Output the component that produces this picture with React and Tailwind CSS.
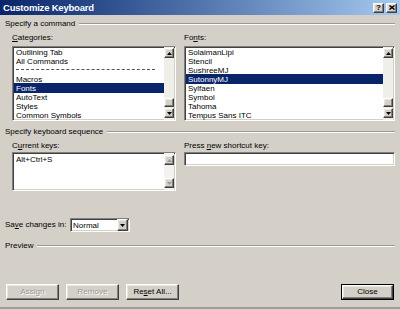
import { useState } from 'react'

const sunken =
  'border border-t-[#808080] border-l-[#808080] border-b-white border-r-white shadow-[inset_1px_1px_0_#404040,inset_-1px_-1px_0_#d4d0c8]'
const raised =
  'border border-t-white border-l-white border-b-[#404040] border-r-[#404040] shadow-[inset_-1px_-1px_0_#808080,inset_1px_1px_0_#e8e6e0]'

const categories = ['Outlining Tab', 'All Commands', '---', 'Macros', 'Fonts', 'AutoText', 'Styles', 'Common Symbols']
const fonts = ['SolaimanLipi', 'Stencil', 'SushreeMJ', 'SutonnyMJ', 'Sylfaen', 'Symbol', 'Tahoma', 'Tempus Sans ITC']

function Arrow({ up, disabled }) {
  return (
    <svg width="5" height="3" viewBox="0 0 5 3">
      <path d={up ? 'M2.5 0L5 3H0Z' : 'M0 0H5L2.5 3Z'} fill={disabled ? '#9c9a95' : '#000'} />
    </svg>
  )
}

function ScrollBtn({ up, disabled }) {
  return (
    <div className={`h-[10px] shrink-0 bg-[#d4d0c8] flex items-center justify-center ${raised}`}>
      <Arrow up={up} disabled={disabled} />
    </div>
  )
}

function Scrollbar({ thumb = true, disabled }) {
  return (
    <div className="w-[10px] shrink-0 flex flex-col bg-[#efeee9] pt-[1px] pb-[2px]">
      <ScrollBtn up disabled={disabled} />
      <div className="flex-1" />
      {thumb && <div className={`h-[9px] mb-[1px] bg-[#d4d0c8] ${raised}`} />}
      <ScrollBtn disabled={disabled} />
    </div>
  )
}

function ListBox({ items, selected }) {
  return (
    <div className={`h-[75px] bg-white flex pr-[1px] ${sunken}`}>
      <div className="flex-1 flex flex-col pl-[1px]">
        {items.map((it) =>
          it === '---' ? (
            <div key={it} className="h-[9.15px] flex items-center px-[2px]">
              <div className="w-full mr-[7px] border-t border-dashed border-[#555]" />
            </div>
          ) : (
            <div
              key={it}
              className={`h-[9.15px] leading-[9px] pt-[0.5px] px-[2px] whitespace-nowrap ${
                it === selected ? 'bg-[#0a246a] text-white' : ''
              }`}
            >
              {it}
            </div>
          )
        )}
      </div>
      <Scrollbar />
    </div>
  )
}

function GroupHeader({ label, className = '' }) {
  return (
    <div className={`h-[10px] flex items-center ${className}`}>
      <span className="leading-[10px]">{label}</span>
      <div className="flex-1 ml-[4px] h-[2px] border-t border-t-[#9b9892] border-b border-b-white" />
    </div>
  )
}

function Button({ children, disabled, def, className = '' }) {
  return (
    <div
      className={`h-[16px] flex items-center justify-center bg-[#d4d0c8] ${
        def ? 'border border-black' : ''
      } ${className}`}
    >
      <div className={`w-full h-full flex items-center justify-center ${raised}`}>
        <span
          className={
            disabled ? 'text-[#9a9893] [text-shadow:1px_1px_0_#fff]' : 'text-black'
          }
        >
          {children}
        </span>
      </div>
    </div>
  )
}

export default function App() {
  const [keys] = useState('Alt+Ctrl+S')
  return (
    <div className="w-[400px] h-[310px] bg-[#d4d0c8] flex flex-col text-[8px] text-black overflow-hidden font-['Liberation_Sans',Arial,sans-serif]">
      <div className="h-[15px] shrink-0 flex items-center justify-between pl-[3px] pr-[3px] bg-gradient-to-r from-[#0a246a] to-[#a6caf0]">
        <span className="text-white font-bold text-[9.5px] leading-[10px] tracking-[-0.2px]">
          Customize Keyboard
        </span>
        <div className="flex gap-[2px]">
          <div className={`w-[11px] h-[10px] bg-[#d4d0c8] flex items-center justify-center ${raised}`}>
            <span className="font-bold text-[8px] leading-[8px]">?</span>
          </div>
          <div className={`w-[11px] h-[10px] bg-[#d4d0c8] flex items-center justify-center ${raised}`}>
            <svg width="6" height="5" viewBox="0 0 6 5">
              <path d="M0.5 0.5L5.5 4.5M5.5 0.5L0.5 4.5" stroke="#000" strokeWidth="1.4" />
            </svg>
          </div>
        </div>
      </div>

      <div className="flex-1 flex flex-col px-[5px]">
        <GroupHeader label="Specify a command" className="mt-[4px]" />

        <div className="flex mt-[4px] pl-[7px] gap-[8px]">
          <div className="w-[164px] flex flex-col">
            <div className="h-[10px] leading-[10px]">
              <u>C</u>ategories:
            </div>
            <div className="mt-[3px]">
              <ListBox items={categories} selected="Fonts" />
            </div>
          </div>
          <div className="flex-1 flex flex-col">
            <div className="h-[10px] leading-[10px]">
              Fo<u>n</u>ts:
            </div>
            <div className="mt-[3px]">
              <ListBox items={fonts} selected="SutonnyMJ" />
            </div>
          </div>
        </div>

        <GroupHeader label="Specify keyboard sequence" className="mt-[6px]" />

        <div className="flex mt-[4px] pl-[7px] gap-[8px]">
          <div className="w-[164px] flex flex-col">
            <div className="h-[10px] leading-[10px]">
              C<u>u</u>rrent keys:
            </div>
            <div className={`mt-[1px] h-[39px] bg-white flex pr-[1px] ${sunken}`}>
              <div className="flex-1 px-[3px] pt-[2px] leading-[9px]">{keys}</div>
              <div className="w-[10px] shrink-0 flex flex-col bg-[#f3f2ee] pt-[2px] pb-[2px]">
                <ScrollBtn up disabled />
                <div className="flex-1" />
                <ScrollBtn disabled />
              </div>
            </div>
          </div>
          <div className="flex-1 flex flex-col">
            <div className="h-[10px] leading-[10px]">
              Press <u>n</u>ew shortcut key:
            </div>
            <div className={`mt-[1px] h-[14px] bg-white ${sunken}`} />
          </div>
        </div>

        <div className="flex items-center mt-[27px] h-[14px]">
          <span className="w-[65px] leading-[10px]">
            Sa<u>v</u>e changes in:
          </span>
          <div className={`w-[60px] h-[14px] bg-white flex items-center ${sunken}`}>
            <span className="flex-1 pl-[2px] leading-[9px]">Normal</span>
            <div className={`w-[11px] h-[12px] mr-[1px] bg-[#d4d0c8] flex items-center justify-center ${raised}`}>
              <Arrow />
            </div>
          </div>
        </div>

        <GroupHeader label="Preview" className="mt-[9px]" />

        <div className="mt-auto mb-[7px] flex gap-[7px] pl-[1px] pr-[1px]">
          <Button disabled className="w-[53px]">
            Assign
          </Button>
          <Button disabled className="w-[53px]">
            Remove
          </Button>
          <Button className="w-[53px]">
            Re<u>s</u>et All...
          </Button>
          <div className="flex-1" />
          <Button def className="w-[53px]">
            Close
          </Button>
        </div>
      </div>
      <div className="h-[2px] shrink-0 bg-[#a09d97] mb-[1px]" />
    </div>
  )
}
